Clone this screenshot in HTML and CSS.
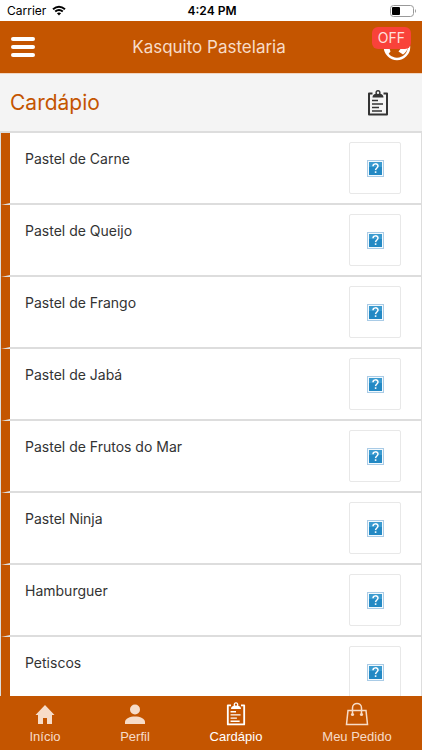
FILE: index.html
```html
<!DOCTYPE html>
<html lang="pt-BR">
<head>
<meta charset="utf-8">
<meta name="viewport" content="width=device-width, initial-scale=1">
<title>Kasquito Pastelaria</title>
<link rel="stylesheet" href="styles.css">
</head>
<body>
<svg class="defs" aria-hidden="true">
  <symbol id="clipboard" viewBox="0 0 22 26">
    <path d="M5.500 3.500H2v21h18v-21h-3.500" fill="none" stroke="currentColor" stroke-width="2" stroke-linejoin="round"/>
    <path fill-rule="evenodd" d="M5.500 7.500c0-2.300 1.300-3.200 3-3.700C8 1.500 9.200 0 11 0s3 1.500 2.500 3.800c1.700.5 3 1.400 3 3.700zM11 1.500a1.200 1.200 0 1 0 0 2.400 1.200 1.200 0 0 0 0-2.400z" fill="currentColor"/>
    <path d="M5 10.500h6M5 14h11M5 17.500h7M5 21h10" fill="none" stroke="currentColor" stroke-width="1.500"/>
  </symbol>
  <symbol id="missing" viewBox="0 0 17 17">
    <path d="M0 0h17v17H0z" fill="#a9cbe6"/>
    <path d="M1 1h15v15H1z" fill="#f2f9fd"/>
    <path d="M2 2h13v13H2z" fill="#2389c4"/>
    <path d="M2 2h13v5H2z" fill="#3b9bd0"/>
    <path d="M6 6.300c0-3.200 5-3.200 5-.2 0 2-2.300 1.800-2.400 4" fill="none" stroke="#fff" stroke-width="1.500"/>
    <path d="M7.800 11.300h1.600v1.600H7.800z" fill="#fff"/>
  </symbol>
</svg>

<div class="status">
  <span class="carrier">Carrier
    <svg width="14" height="11" viewBox="0 0 14 11" aria-hidden="true">
      <path d="M1 4.200q6-5 12 0M3.200 6.600q3.800-3.200 7.600 0" fill="none" stroke="#000" stroke-width="2"/>
      <path d="M4.900 8.300q2.100-1.700 4.200 0L7 10.600z"/>
    </svg>
  </span>
  <span class="time">4:24 PM</span>
  <svg class="battery" width="27" height="12" viewBox="0 0 27 12" aria-hidden="true">
    <rect x=".5" y=".5" width="23" height="11" rx="3" fill="#fff" stroke="#999"/>
    <rect x="2" y="2" width="8" height="8" rx="1"/>
    <path d="M25 4q2 2 0 4z" fill="#999"/>
  </svg>
</div>

<header class="topbar">
  <button class="menu" aria-label="Menu"><span></span><span></span><span></span></button>
  <h1>Kasquito Pastelaria</h1>
  <button class="state" aria-label="Estado: OFF">
    <svg width="28" height="28" viewBox="0 0 28 28" aria-hidden="true">
      <circle cx="14" cy="14" r="12" fill="none" stroke="#fff" stroke-width="2.500"/>
      <path d="M2 15.500h4.500l1 3L5 21.500q-2.500-2.500-3-6zM19 14h6q-1 5-5 7.500l-4.500-3z" fill="#fff"/>
    </svg>
    <span class="badge">OFF</span>
  </button>
</header>

<section class="heading">
  <h2>Cardápio</h2>
  <button aria-label="Ver cardápio"><svg width="22" height="26"><use href="#clipboard"/></svg></button>
</section>

<main>
  <ul class="list">
    <li><a href="#">Pastel de Carne</a><span class="thumb"><svg width="17" height="17"><use href="#missing"/></svg></span></li>
    <li><a href="#">Pastel de Queijo</a><span class="thumb"><svg width="17" height="17"><use href="#missing"/></svg></span></li>
    <li><a href="#">Pastel de Frango</a><span class="thumb"><svg width="17" height="17"><use href="#missing"/></svg></span></li>
    <li><a href="#">Pastel de Jabá</a><span class="thumb"><svg width="17" height="17"><use href="#missing"/></svg></span></li>
    <li><a href="#">Pastel de Frutos do Mar</a><span class="thumb"><svg width="17" height="17"><use href="#missing"/></svg></span></li>
    <li><a href="#">Pastel Ninja</a><span class="thumb"><svg width="17" height="17"><use href="#missing"/></svg></span></li>
    <li><a href="#">Hamburguer</a><span class="thumb"><svg width="17" height="17"><use href="#missing"/></svg></span></li>
    <li><a href="#">Petiscos</a><span class="thumb"><svg width="17" height="17"><use href="#missing"/></svg></span></li>
  </ul>
</main>

<nav class="tabs">
  <a href="#">
    <svg width="20" height="24" viewBox="0 0 20 24" aria-hidden="true"><path d="M10 3L.5 13H3v9h5v-6h4v6h5v-9h2.500z" fill="currentColor"/></svg>
    Início
  </a>
  <a href="#">
    <svg width="20" height="24" viewBox="0 0 20 24" aria-hidden="true"><circle cx="10" cy="7.500" r="5" fill="currentColor"/><path d="M0 22v-2c0-3.500 5-5.500 10-5.500s10 2 10 5.500v2z" fill="currentColor"/></svg>
    Perfil
  </a>
  <a href="#" class="active" aria-current="page">
    <svg width="20" height="24"><use href="#clipboard"/></svg>
    Cardápio
  </a>
  <a href="#">
    <svg width="24" height="24" viewBox="0 0 24 24" aria-hidden="true">
      <path d="M3 8.500h18l1.500 14h-21zM7.500 12V6c0-6 9-6 9 0v6" fill="none" stroke="currentColor" stroke-width="1.500"/>
      <circle cx="7.500" cy="12.500" r="1.600" fill="currentColor"/><circle cx="16.500" cy="12.500" r="1.600" fill="currentColor"/>
    </svg>
    Meu Pedido
  </a>
</nav>
</body>
</html>
```
FILE: styles.css
```css
* { box-sizing: border-box; }

:root {
  --brand: #c45500;
  --tint: #f7dcc8;
}

body {
  margin: 0;
  height: 100vh;
  display: flex;
  flex-direction: column;
  overflow: hidden;
  background: #fff;
  color: #333;
  font-family: Inter, Roboto, sans-serif;
  font-size: 14px;
}

.defs {
  position: absolute;
  width: 0;
  height: 0;
}

svg { display: block; }
a { color: inherit; text-decoration: none; }

button {
  padding: 0;
  border: 0;
  background: none;
  color: inherit;
  font: inherit;
}

.status {
  flex: none;
  height: 21px;
  display: grid;
  grid-template-columns: 1fr auto 1fr;
  align-items: center;
  padding: 0 5px 0 7px;
  color: #000;
  font-size: 12px;
}

.carrier {
  display: flex;
  align-items: center;
  gap: 6px;
}

.time { font-weight: 600; }
.battery { justify-self: end; }

.topbar {
  flex: none;
  height: 53px;
  display: grid;
  grid-template-columns: 1fr auto 1fr;
  align-items: center;
  padding: 0 11px;
  border-bottom: 1px solid #f1d5c0;
  background: var(--brand);
}

.topbar h1 {
  margin: 0;
  padding-right: 4px;
  color: var(--tint);
  font-size: 17px;
  font-weight: 400;
}

.menu {
  width: 24px;
  display: grid;
  gap: 4px;
}

.menu span {
  height: 4px;
  border-radius: 2px;
  background: #fff;
}

.state {
  position: relative;
  justify-self: end;
}

.badge {
  position: absolute;
  top: -6px;
  right: 0;
  padding: 0 6px;
  border-radius: 6px;
  background: #f9423a;
  color: #ffe0dc;
  font-size: 14px;
  line-height: 22px;
}

.heading {
  flex: none;
  height: 59px;
  display: flex;
  align-items: center;
  justify-content: space-between;
  padding: 0 33px 0 10px;
  border-bottom: 2px solid #ddd;
  background: #f4f4f4;
}

.heading h2 {
  margin: 0;
  color: var(--brand);
  font-size: 21px;
  font-weight: 400;
}

main {
  flex: 1;
  min-height: 0;
  overflow: hidden;
  padding: 0 1px;
  background: #ddd;
}

.list {
  margin: 0;
  padding: 0;
  list-style: none;
}

.list li {
  height: 72px;
  display: flex;
  align-items: flex-start;
  justify-content: space-between;
  padding: 9px 20px 0 15px;
  border-left: 9px solid var(--brand);
  border-bottom: 2px solid #ddd;
  background: #fff;
}

.list a {
  padding-top: 8px;
  line-height: 18px;
}

.thumb {
  width: 52px;
  height: 52px;
  display: grid;
  place-items: center;
  border: 1px solid #e8e8e8;
  border-radius: 2px;
}

.tabs {
  flex: none;
  height: 54px;
  display: grid;
  grid-template-columns: 90fr 90fr 112fr 130fr;
  background: var(--brand);
  color: var(--tint);
  font-family: "Liberation Sans", sans-serif;
  font-size: 13px;
}

.tabs a {
  display: flex;
  flex-direction: column;
  align-items: center;
  padding-top: 6px;
  gap: 3px;
}

.tabs .active { color: #fff; }
```
